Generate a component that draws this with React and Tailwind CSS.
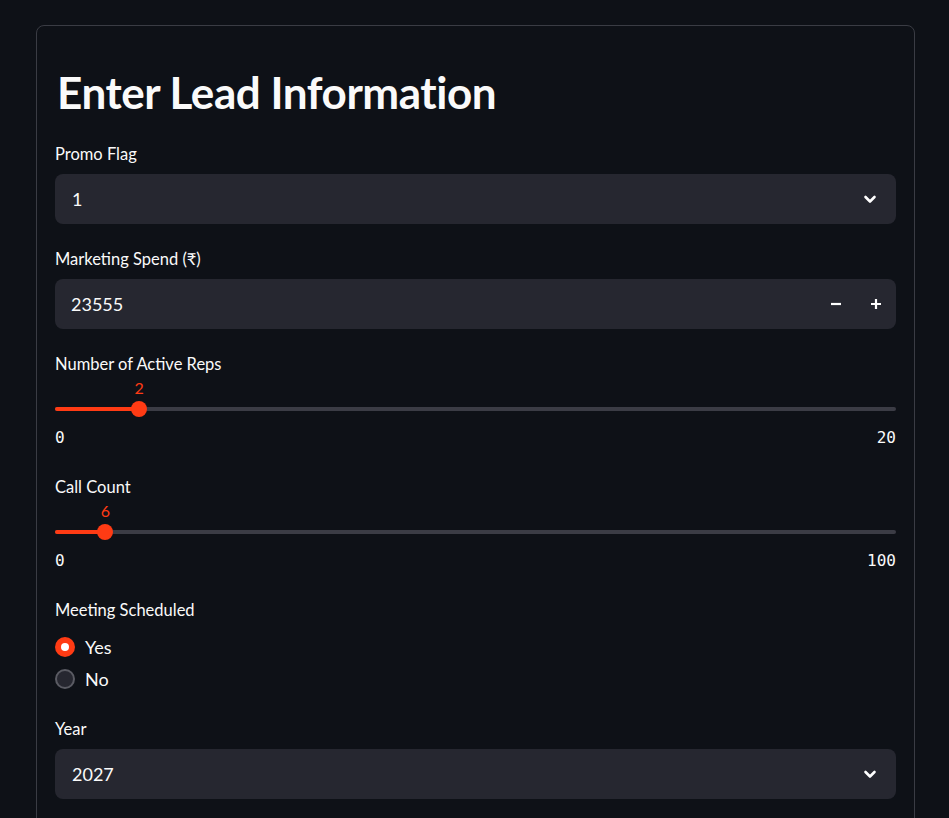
import { useState } from 'react';

const RED = 'bg-[#ff3b14]';

const Chevron = () => (
  <svg width="14" height="14" viewBox="0 0 14 14" className="text-white">
    <path d="M2.5 5 L7 9.5 L11.5 5" fill="none" stroke="currentColor" strokeWidth="2.6" strokeLinecap="round" strokeLinejoin="round" />
  </svg>
);

const Label = ({ children }) => (
  <div className="h-6 leading-6 text-[16.5px] text-[#fafafa]">{children}</div>
);

const SelectBox = ({ value }) => (
  <div className="mt-2 h-[50px] rounded-lg bg-[#262730] flex items-center justify-between pl-[17px] pr-[19px]">
    <span className="text-[18px] text-[#fafafa]">{value}</span>
    <Chevron />
  </div>
);

const Slider = ({ label, value, min, max }) => {
  const pct = ((value - min) / (max - min)) * 100;
  return (
    <div>
      <Label>{label}</Label>
      <div className="h-5" />
      <div className="relative h-[26px]">
        <div className="absolute left-0 right-0 top-[11px] h-1 rounded-full bg-[#3b3c45]" />
        <div className={`absolute left-0 top-[11px] h-1 rounded-full ${RED}`} style={{ width: `${pct}%` }} />
        <div
          className="absolute top-[5px] -ml-2 w-4 h-4 rounded-full bg-[#ff3b14]"
          style={{ left: `${pct}%` }}
        >
          <span className="absolute left-1/2 -translate-x-1/2 -top-[21px] h-4 leading-4 text-[16px] text-[#ff3b14]">
            {value}
          </span>
        </div>
      </div>
      <div className="mt-1 h-6 leading-6 flex justify-between text-[16px] text-[#fafafa] font-['DejaVu_Sans_Mono',monospace]">
        <span>{min}</span>
        <span>{max}</span>
      </div>
    </div>
  );
};

const Radio = ({ label, checked }) => (
  <div className="h-8 flex items-center gap-[10px]">
    {checked ? (
      <div className="w-5 h-5 rounded-full bg-[#ff3b14] flex items-center justify-center">
        <div className="w-2 h-2 rounded-full bg-white" />
      </div>
    ) : (
      <div className="w-5 h-5 rounded-full bg-[#262730] border-2 border-[#5a5b63]" />
    )}
    <span className="text-[18px] text-[#fafafa]">{label}</span>
  </div>
);

export default function App() {
  const [meeting] = useState('Yes');

  return (
    <div className="min-h-screen bg-[#0e1117] pt-[25px] pl-9 pr-[34px] font-['Lato',sans-serif] overflow-hidden h-[818px]">
      <div className="border border-[#3a3c44] rounded-lg px-[18px] pt-9 pb-10">
        <h1 className="h-[60px] leading-[60px] text-[44px] font-bold text-[#fafafa] pl-[2px] tracking-[-0.01em]">
          Enter Lead Information
        </h1>

        <div className="mt-5">
          <Label>Promo Flag</Label>
          <SelectBox value="1" />
        </div>

        <div className="mt-[23px]">
          <Label>Marketing Spend (₹)</Label>
          <div className="mt-2 h-[50px] rounded-lg bg-[#262730] flex items-center pl-4">
            <span className="flex-1 text-[18px] text-[#fafafa]">23555</span>
            <button className="w-10 h-full flex items-center justify-center text-white">
              <svg width="12" height="12" viewBox="0 0 12 12"><path d="M1 6 H11" stroke="currentColor" strokeWidth="2.2" /></svg>
            </button>
            <button className="w-10 h-full flex items-center justify-center text-white">
              <svg width="12" height="12" viewBox="0 0 12 12"><path d="M1 6 H11 M6 1 V11" stroke="currentColor" strokeWidth="2.2" /></svg>
            </button>
          </div>
        </div>

        <div className="mt-[23px]">
          <Slider label="Number of Active Reps" value={2} min={0} max={20} />
        </div>

        <div className="mt-[25px]">
          <Slider label="Call Count" value={6} min={0} max={100} />
        </div>

        <div className="mt-[25px]">
          <Label>Meeting Scheduled</Label>
          <div className="mt-[9px]">
            <Radio label="Yes" checked={meeting === 'Yes'} />
            <Radio label="No" checked={meeting === 'No'} />
          </div>
        </div>

        <div className="mt-[22px]">
          <Label>Year</Label>
          <SelectBox value="2027" />
        </div>
      </div>
    </div>
  );
}
